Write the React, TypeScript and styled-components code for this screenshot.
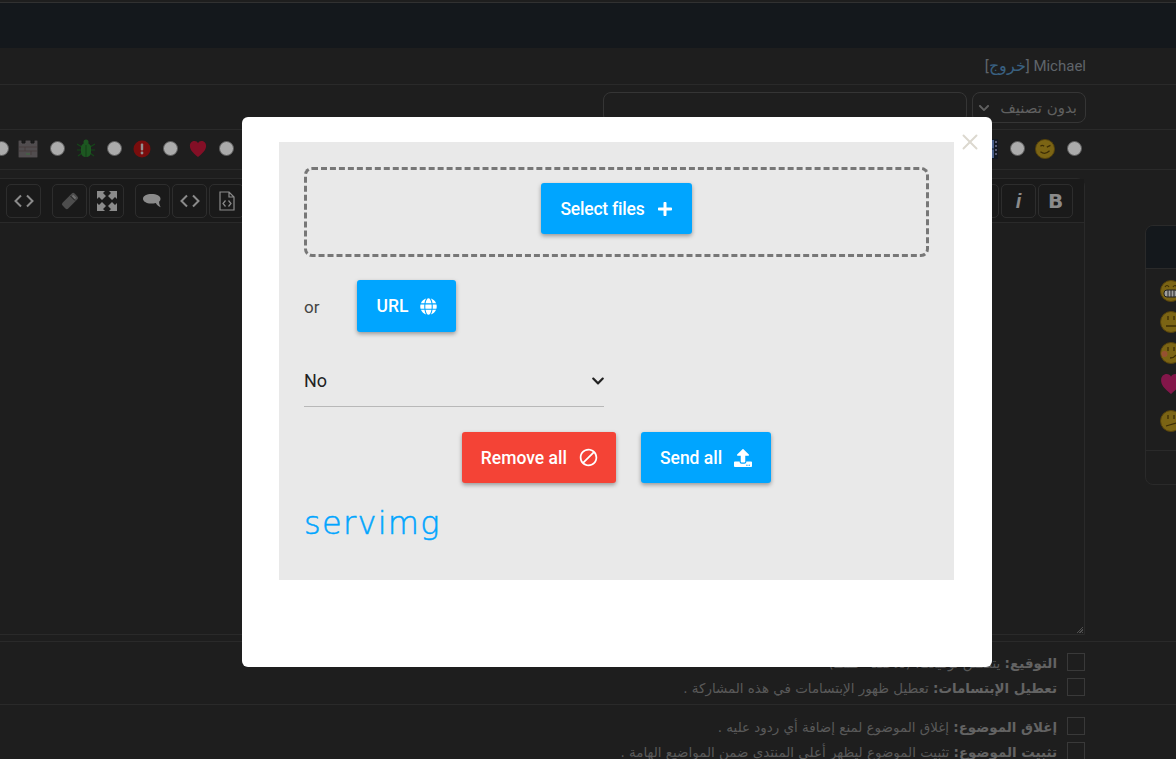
import styled, { createGlobalStyle } from 'styled-components';
import { X } from 'lucide-react';
import { FaChevronDown, FaGlobe, FaPlus, FaUpload } from 'react-icons/fa';
import { MdBlock } from 'react-icons/md';

const GlobalStyle = createGlobalStyle`
  html, body {
    margin: 0;
    height: 759px;
    overflow: hidden;
    background: #2d2d2d;
  }
`;

// COMPONENT emoji drawings, the page uses small gif smilies
const Face = ({ kind, size = 22 }: { kind: string; size?: number }) => (
  <svg width={size} height={size} viewBox='0 0 22 22'>
    <circle cx='11' cy='11' r='10.5' fill='#b8951f' stroke='#806410' />
    {kind === 'wink' && (
      <>
        <path d='M6 8q2-2 4 0M13 9l4-2' stroke='#5a4308' strokeWidth='1.4' fill='none' />
        <path d='M6 14q5 4 10-1' stroke='#5a4308' strokeWidth='1.4' fill='none' />
      </>
    )}
    {kind === 'grin' && (
      <>
        <path d='M5 7q2-3 4 0M13 7q2-3 4 0' stroke='#5a4308' strokeWidth='1.2' fill='none' />
        <rect x='4' y='10' width='14' height='7' rx='3' fill='#eee' stroke='#333' />
        <path d='M8 10v7M11 10v7M14 10v7' stroke='#333' />
      </>
    )}
    {kind === 'neutral' && (
      <path d='M8 5v4M14 5v4M6 15h10' stroke='#5a4308' strokeWidth='1.3' fill='none' />
    )}
    {kind === 'blush' && (
      <>
        <circle cx='4.5' cy='12' r='3' fill='#e07a4a' />
        <path d='M8 5v4M14 5v4M10 16q4 0 6-3' stroke='#5a4308' strokeWidth='1.3' fill='none' />
      </>
    )}
    {kind === 'confused' && (
      <path d='M8 5v4M14 5v4M6 16l10-3' stroke='#5a4308' strokeWidth='1.3' fill='none' />
    )}
  </svg>
);

const HeartIcon = ({ color, size }: { color: string; size: number }) => (
  <svg width={size} height={size} viewBox='0 0 20 20'>
    <path d='M10 19C4 14 1 11 1 6.500C1 3 3.500 1 6 1c2 0 3.200 1 4 2.500C10.800 2 12 1 14 1c2.500 0 5 2 5 5.500C19 11 16 14 10 19z' fill={color} />
  </svg>
);

const AlertIcon = () => (
  <svg width='18' height='18' viewBox='0 0 18 18'>
    <circle cx='9' cy='9' r='8.500' fill='#b51414' />
    <rect x='7.800' y='3.500' width='2.400' height='7' rx='1' fill='#d8d8d8' />
    <circle cx='9' cy='13' r='1.400' fill='#d8d8d8' />
  </svg>
);

const BugIcon = () => (
  <svg width='18' height='20' viewBox='0 0 18 20'>
    <path d='M0 5l5 3M0 11h5M1 17l4-3M18 5l-5 3M18 11h-5M17 17l-4-3' stroke='#1f6a25' strokeWidth='1.2' />
    <path d='M4 9c0-3 2-5 5-5s5 2 5 5v4c0 3-2 5-5 5s-5-2-5-5z' fill='#2c8232' />
    <path d='M9 6v12' stroke='#1d5a22' />
    <circle cx='9' cy='3' r='2.500' fill='#2c8232' />
  </svg>
);

const CastleIcon = () => (
  <svg width='20' height='18' viewBox='0 0 20 18'>
    <path d='M0 0h4v3h3V0h6v3h3V0h4v18H0z' fill='#7a7476' stroke='#222' />
    <path d='M1 7h18M1 11h18M7 7v4M13 11v4' stroke='#6a5a5c' />
    <path d='M8 14h4' stroke='#6a8a6a' strokeWidth='2' />
  </svg>
);

const FilmIcon = () => (
  <svg width='20' height='20' viewBox='0 0 20 20'>
    <rect width='20' height='20' fill='#1c2433' />
    <rect x='4' y='1' width='12' height='18' fill='#6f8fd0' />
    <path d='M4 10h12' stroke='#1c2433' />
    <path d='M18 2v16' stroke='#88a' strokeWidth='2' strokeDasharray='2 2' />
  </svg>
);

const CodeIcon = () => (
  <svg width='20' height='14' viewBox='0 0 20 14' fill='none' stroke='currentColor' strokeWidth='2'>
    <path d='M7 1.500L1.500 7 7 12.500M13 1.500L18.500 7 13 12.500' />
  </svg>
);

const FileCodeIcon = () => (
  <svg width='16' height='20' viewBox='0 0 16 20' fill='none' stroke='currentColor' strokeWidth='1.200'>
    <path d='M1 1h9l5 5v13H1zM10 1v5h5' />
    <path d='M6.500 9.500L4 12.500l2.500 3M9.500 9.500l2.500 3-2.500 3' />
  </svg>
);

const EraserIcon = () => (
  <svg width='18' height='18' viewBox='0 0 18 18'>
    <rect x='0.500' y='5' width='17' height='8' rx='2' fill='currentColor' transform='rotate(-45 9 9)' />
    <path d='M9.500 4l4.500 4.500' stroke='#2d2d2d' strokeWidth='1' />
    <path d='M11.500 3.500l3 3' stroke='#a8a8a8' strokeWidth='2' />
  </svg>
);

const ExpandIcon = () => (
  <svg width='20' height='20' viewBox='0 0 20 20' fill='currentColor'>
    <path d='M0 0h8L6 2l3 3-4 4-3-3-2 2z' />
    <path d='M20 0h-8l2 2-3 3 4 4 3-3 2 2z' />
    <path d='M0 20h8l-2-2 3-3-4-4-3 3-2-2z' />
    <path d='M20 20h-8l2-2-3-3 4-4 3 3 2-2z' />
  </svg>
);

const CommentIcon = () => (
  <svg width='19' height='15' viewBox='0 0 19 15' fill='currentColor'>
    <path d='M8.500 0C3.800 0 0 2 0 4.800c0 2.600 3.400 4.700 8 4.800 1.800 0 3.400-.2 4.800-.7.800 1.600 2.800 3.300 5 4.300-1.200-1.600-1.700-3.400-1.700-5.400C17 7 17.500 6 17.500 4.800 17.500 2 13.500 0 8.500 0z' />
  </svg>
);

const RADIO_ICONS = [
  <Face key='a' kind='wink' size={20} />,
  <FilmIcon key='b' />,
  ...Array.from({ length: 13 }, (_, i) => <Face key={`h${i}`} kind='neutral' size={20} />),
  <HeartIcon key='c' color='#c4173a' size={18} />,
  <AlertIcon key='d' />,
  <BugIcon key='e' />,
  <CastleIcon key='f' />,
  null,
];

const OPTIONS = [
  [
    ['التوقيع:', 'يتضمن توقيعك. (للأعضاء فقط)'],
    ['تعطيل الإبتسامات:', 'تعطيل ظهور الإبتسامات في هذه المشاركة .'],
  ],
  [
    ['إغلاق الموضوع:', 'إغلاق الموضوع لمنع إضافة أي ردود عليه .'],
    ['تثبيت الموضوع:', 'تثبيت الموضوع ليظهر أعلى المنتدى ضمن المواضيع الهامة .'],
  ],
];

// COMPONENT page
const App = () => {
  return (
    <>
      <GlobalStyle />
      <Page>
        <Nav />
        <UserRow>
          <span>Michael</span> [<UserLink>خروج</UserLink>]
        </UserRow>
        <TitleRow>
          <CategorySelect>
            <span>بدون تصنيف</span>
            <FaChevronDown size={12} />
          </CategorySelect>
          <TitleInput />
        </TitleRow>
        <IconRow>
          {RADIO_ICONS.map((icon, i) => (
            <IconCell key={i}>
              <Radio type='radio' name='icon' />
              {icon}
            </IconCell>
          ))}
        </IconRow>
        <Main>
          <SidePanel>
            <SideHead />
            <SideBody>
              <Face kind='grin' />
              <Face kind='neutral' />
              <Face kind='blush' />
              <HeartIcon color='#c4226f' size={22} />
              <LastFace>
                <Face kind='confused' />
              </LastFace>
            </SideBody>
          </SidePanel>
          <Editor>
            <Toolbar>
              <ToolGroup>
                <ToolButton><BoldGlyph>B</BoldGlyph></ToolButton>
                <ToolButton><ItalicGlyph>i</ItalicGlyph></ToolButton>
                <ToolButton />
              </ToolGroup>
              <ToolGroup>
                <ToolButton><FileCodeIcon /></ToolButton>
                <ToolButton><CodeIcon /></ToolButton>
                <ToolButton $spaced><CommentIcon /></ToolButton>
                <ToolButton><ExpandIcon /></ToolButton>
                <ToolButton $spaced $dim><EraserIcon /></ToolButton>
                <ToolButton><CodeIcon /></ToolButton>
              </ToolGroup>
            </Toolbar>
            <EditorBody />
          </Editor>
        </Main>
        <Options>
          {OPTIONS.map((group, g) => (
            <OptionGroup key={g} $first={g === 0}>
              {group.map(([label, text]) => (
                <OptionRow key={label}>
                  <OptionBox />
                  <OptionText>
                    <b>{label}</b> {text}
                  </OptionText>
                </OptionRow>
              ))}
            </OptionGroup>
          ))}
        </Options>
      </Page>
      <Overlay>
        <Modal>
          <CloseButton>
            <X size={26} strokeWidth={1.8} />
          </CloseButton>
          <UploadPanel>
            <DropZone>
              <SelectButton>
                Select files <FaPlus size={16} />
              </SelectButton>
            </DropZone>
            <UrlRow>
              <OrLabel>or</OrLabel>
              <UrlButton>
                URL <FaGlobe size={17} />
              </UrlButton>
            </UrlRow>
            <Dropdown>
              <span>No</span>
              <DropdownChevron size={14} />
            </Dropdown>
            <Actions>
              <ActionButton $danger>
                Remove all <BlockIcon size={21} />
              </ActionButton>
              <ActionButton>
                Send all <FaUpload size={18} />
              </ActionButton>
            </Actions>
            <Logo>servimg</Logo>
          </UploadPanel>
        </Modal>
      </Overlay>
    </>
  );
};

// PARAM style, page under the overlay
const Page = styled.div`
  direction: rtl;
  width: 1176px;
  padding-top: 2px;
  font-family: 'DejaVu Sans', sans-serif;
  color: #8f8f8f;
`;

const Nav = styled.div`
  height: 45px;
  background: #1e242b;
  border-top: 1px solid #4a4a4a;
`;

const UserRow = styled.div`
  height: 36px;
  line-height: 36px;
  padding-right: 90px;
  border-bottom: 1px solid #3f3f3f;
  font-family: Roboto, sans-serif;
  font-size: 15px;
  color: #8e969f;
`;

const UserLink = styled.a`
  font-size: 16px;
  color: #5590c0;
`;

const TitleRow = styled.div`
  display: flex;
  gap: 5px;
  height: 37px;
  padding: 7px 90px 0 0;
  border-bottom: 1px solid #3f3f3f;
`;

const CategorySelect = styled.div`
  display: flex;
  align-items: center;
  justify-content: space-between;
  box-sizing: border-box;
  width: 114px;
  height: 31px;
  padding: 0 8px 0 5px;
  border: 1px solid #505050;
  border-radius: 8px;
  font-size: 15px;
  color: #8f8f8f;
`;

const TitleInput = styled.div`
  box-sizing: border-box;
  width: 364px;
  height: 31px;
  border: 1px solid #505050;
  border-radius: 8px;
`;

const IconRow = styled.div`
  display: flex;
  align-items: center;
  box-sizing: border-box;
  height: 40px;
  padding: 0 94.500px 2px 0;
  border-bottom: 1px solid #3f3f3f;
`;

const IconCell = styled.div`
  flex: 0 0 56.470px;
  display: flex;
  align-items: center;
  gap: 12px;
`;

const Radio = styled.input`
  appearance: none;
  flex: none;
  box-sizing: border-box;
  width: 15px;
  height: 15px;
  margin: 0;
  border: 1px solid #888;
  border-radius: 50%;
  background: #fff;
`;

const Main = styled.div`
  display: flex;
  gap: 60px;
  margin-top: 8px;
`;

const SidePanel = styled.div`
  flex: none;
  box-sizing: border-box;
  width: 120px;
  height: 260px;
  margin: 47px -89px 0 0;
  border: 1px solid #3f3f3f;
  border-radius: 8px;
  overflow: hidden;
`;

const SideHead = styled.div`
  height: 42px;
  background: #1e242b;
  border-bottom: 1px solid #3f3f3f;
`;

const SideBody = styled.div`
  direction: ltr;
  display: flex;
  flex-direction: column;
  gap: 9px;
  height: 170px;
  padding: 11px 0 0 14px;
  border-bottom: 1px solid #3f3f3f;
`;

const LastFace = styled.div`
  margin-top: 6px;
`;

const Editor = styled.div`
  flex: 1;
  min-width: 0;
  box-sizing: border-box;
  height: 457px;
  margin-left: -20px;
  border: 1px solid #3f3f3f;
  border-radius: 0 8px 0 0;
  position: relative;
`;

const Toolbar = styled.div`
  display: flex;
  justify-content: space-between;
  box-sizing: border-box;
  height: 44px;
  padding: 5px 11px 0 25px;
  background: #282828;
  border-bottom: 1px solid #3f3f3f;
`;

const ToolGroup = styled.div`
  display: flex;
  gap: 2px;
`;

const ToolButton = styled.div<{ $spaced?: boolean; $dim?: boolean }>`
  display: flex;
  align-items: center;
  justify-content: center;
  box-sizing: border-box;
  width: 35px;
  height: 34px;
  margin-left: ${({ $spaced }) => ($spaced ? '9px' : '0')};
  border: 1px solid #444;
  border-radius: 5px;
  color: ${({ $dim }) => ($dim ? '#737373' : '#cfcfcf')};
`;

const BoldGlyph = styled.span`
  font: 900 20px 'DejaVu Sans', sans-serif;
`;

const ItalicGlyph = styled.span`
  font: italic 700 20px 'Liberation Sans', sans-serif;
`;

const EditorBody = styled.div`
  height: 411px;
  &::after {
    content: '';
    position: absolute;
    right: 1px;
    bottom: 1px;
    width: 7px;
    height: 7px;
    background: repeating-linear-gradient(135deg, transparent 0 1px, #777 1px 2px);
    clip-path: polygon(100% 0, 100% 100%, 0 100%);
  }
`;

const Options = styled.div`
  margin-top: 6px;
`;

const OptionGroup = styled.div<{ $first: boolean }>`
  display: flex;
  flex-direction: column;
  gap: 7px;
  padding: ${({ $first }) => ($first ? '11px 91px 8px 0' : '12px 91px 0 0')};
  border-top: 1px solid #3f3f3f;
`;

const OptionRow = styled.div`
  display: flex;
  align-items: center;
  gap: 10px;
  height: 18px;
`;

const OptionBox = styled.div`
  flex: none;
  box-sizing: border-box;
  width: 18px;
  height: 18px;
  border: 1px solid #555;
`;

const OptionText = styled.div`
  padding-top: 3px;
  font-size: 13.450px;
  color: #858585;
  white-space: nowrap;
  b {
    color: #949494;
  }
`;

// PARAM style, modal
const Overlay = styled.div`
  position: fixed;
  inset: 0;
  background: rgba(0, 0, 0, 0.33);
`;

const Modal = styled.div`
  position: absolute;
  top: 117px;
  left: 242px;
  box-sizing: border-box;
  width: 750px;
  height: 550px;
  padding: 25px 38px 0 37px;
  background: #fff;
  border-radius: 6px;
  font-family: Roboto, sans-serif;
`;

const CloseButton = styled.div`
  position: absolute;
  top: 12px;
  right: 9px;
  display: flex;
  color: #dcd8cf;
`;

const UploadPanel = styled.div`
  box-sizing: border-box;
  height: 438px;
  padding: 25px;
  background: #e9e9e9;
`;

const DropZone = styled.div`
  display: flex;
  align-items: center;
  justify-content: center;
  box-sizing: border-box;
  height: 90px;
  padding-bottom: 7px;
  border: 3px dashed #777;
  border-radius: 8px;
`;

const ActionButton = styled.div<{ $danger?: boolean }>`
  display: inline-flex;
  align-items: center;
  gap: 12px;
  height: 51px;
  padding: 0 19px;
  border-radius: 3px;
  background: ${({ $danger }) => ($danger ? '#f44336' : '#00a5ff')};
  box-shadow: 0 2px 4px rgba(0, 0, 0, 0.35);
  color: #fff;
  font-size: 17.500px;
  font-weight: 500;
  white-space: nowrap;
`;

const SelectButton = styled(ActionButton)`
  flex: none;
  letter-spacing: -0.2px;
`;

const UrlRow = styled.div`
  display: flex;
  align-items: center;
  gap: 38px;
  margin: 23px 0 24px;
`;

const UrlButton = styled(ActionButton)`
  height: 52px;
`;

const BlockIcon = styled(MdBlock)`
  margin: 0 -2px 0 -1px;
`;

const OrLabel = styled.span`
  padding-top: 2px;
  font-size: 17px;
  color: #444;
`;

const Dropdown = styled.div`
  display: flex;
  align-items: center;
  justify-content: space-between;
  box-sizing: border-box;
  width: 300px;
  height: 51px;
  padding-bottom: 2px;
  border-bottom: 1px solid #b8b8b8;
  font-size: 18px;
  color: #222;
`;

const DropdownChevron = styled(FaChevronDown)`
  margin: 2px -1px 0 0;
`;

const Actions = styled.div`
  display: flex;
  justify-content: center;
  gap: 25px;
  margin-top: 25px;
`;

const Logo = styled.div`
  margin-top: 18px;
  font-family: 'DejaVu Sans', sans-serif;
  font-size: 32px;
  font-weight: 200;
  letter-spacing: 1.300px;
  line-height: 44px;
  color: #00a5ff;
  -webkit-text-stroke: 0.5px #00a5ff;
`;

export default App;
